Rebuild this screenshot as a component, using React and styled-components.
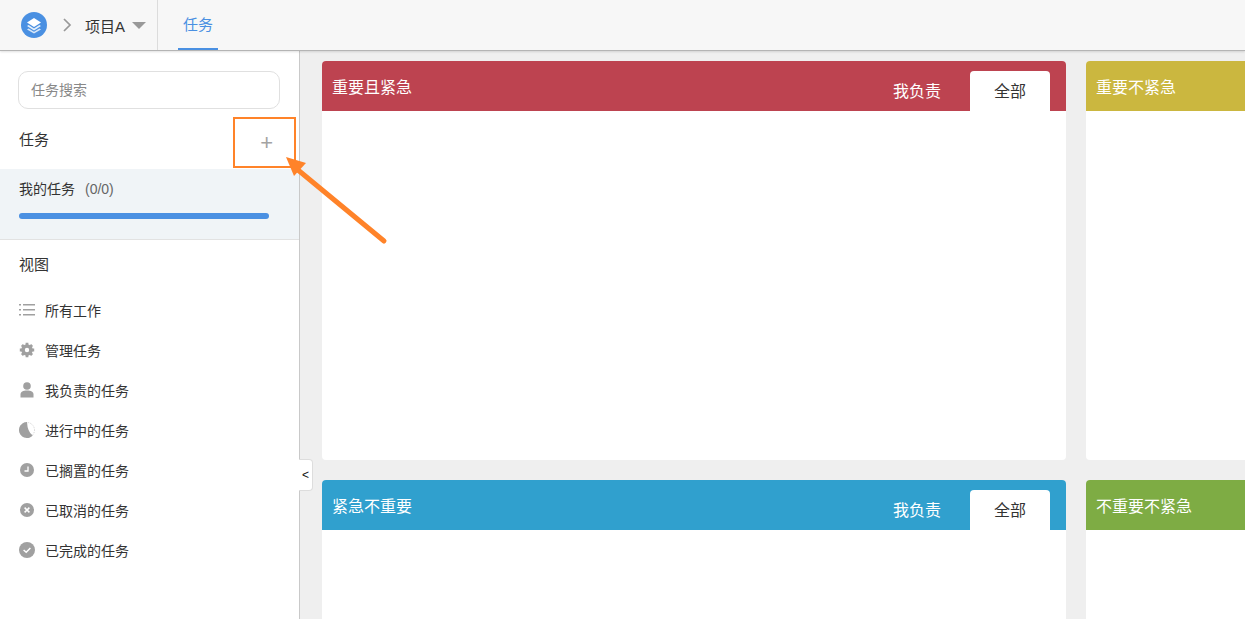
import React from 'react';
import styled, { createGlobalStyle } from 'styled-components';

const GlobalStyle = createGlobalStyle`
    html, body {
        margin: 0;
        height: 100%;
        overflow: hidden;
        background: #efefef;
        font-family: "Liberation Sans", "Noto Sans CJK SC", sans-serif;
    }
    * { box-sizing: border-box; }
`;

const Page = styled.div`
    position: relative;
    width: 1245px;
    height: 619px;
    overflow: hidden;
    display: flex;
    flex-direction: column;
`;

const TopBar = styled.header`
    height: 51px;
    flex: none;
    display: flex;
    background: #f7f7f7;
    border-bottom: 1px solid #b4b4b4;
    box-shadow: 0 1px 2px rgba(0, 0, 0, .12);
    z-index: 1;
`;

const Brand = styled.div`
    width: 158px;
    display: flex;
    align-items: center;
    padding-left: 21px;
    border-right: 1px solid #dcdcdc;
`;

const ChevronWrap = styled.span`
    display: flex;
    margin-left: 15px;
`;

const ProjectName = styled.span`
    font-size: 15px;
    color: #333;
    margin-left: 13px;
`;

const Caret = styled.span`
    width: 0;
    height: 0;
    margin: 1px 0 0 7px;
    border-left: 7px solid transparent;
    border-right: 7px solid transparent;
    border-top: 7px solid #999;
`;

const NavTab = styled.div`
    width: 40px;
    margin-left: 20px;
    height: 50px;
    line-height: 50px;
    text-align: center;
    font-size: 15px;
    color: #4a90e2;
    border-bottom: 2px solid #4a90e2;
`;

const Body = styled.div`
    flex: 1;
    display: flex;
    min-height: 0;
`;

const Sidebar = styled.aside`
    position: relative;
    width: 300px;
    flex: none;
    background: #fff;
    border-right: 1px solid #c9c9c9;
`;

const SearchWrap = styled.div`
    padding: 20px 19px 0 18px;
`;

const SearchBox = styled.div`
    height: 38px;
    border: 1px solid #e0e0e0;
    border-radius: 10px;
    padding-left: 12px;
    font-size: 14px;
    line-height: 36px;
    color: #888;
`;

const SectionHead = styled.div`
    display: flex;
    align-items: center;
    justify-content: space-between;
    height: 60px;
    padding: 0 26px 2px 19px;
    font-size: 15px;
    color: #333;
`;

const PlusIcon = styled.span`
    font-size: 22px;
    line-height: 1;
    color: #a3a3a3;
    margin-top: 9px;
`;

const MyTasks = styled.div`
    height: 71px;
    padding: 12px 30px 0 19px;
    background: #f0f4f7;
    border-bottom: 1px solid #e2e2e2;
`;

const MyTasksLabel = styled.div`
    font-size: 14px;
    line-height: 16px;
    color: #333;
`;

const Count = styled.span`
    margin-left: 10px;
    color: #666;
`;

const ProgressBar = styled.div`
    height: 6px;
    margin-top: 16px;
    border-radius: 3px;
    background: #4a90e2;
`;

const ViewTitle = styled.div`
    padding: 16px 0 0 19px;
    height: 50px;
    font-size: 15px;
    line-height: 18px;
    color: #333;
`;

const ViewList = styled.ul`
    list-style: none;
    margin: 0;
    padding: 0;
`;

const ViewItem = styled.li`
    display: flex;
    align-items: center;
    height: 40px;
    padding-left: 19px;
    font-size: 14px;
    color: #333;
`;

const IconSlot = styled.span`
    width: 16px;
    height: 16px;
    margin-right: 10px;
    flex: none;
    display: flex;
    justify-content: center;
    align-items: center;
`;

const CollapseHandle = styled.div`
    position: absolute;
    top: 408px;
    right: -14px;
    width: 14px;
    height: 32px;
    background: #fff;
    border: 1px solid #ddd;
    border-left: none;
    border-radius: 0 4px 4px 0;
    font-size: 12px;
    line-height: 30px;
    text-align: center;
    color: #111;
    z-index: 2;
`;

const Board = styled.main`
    flex: 1;
    min-width: 0;
    display: grid;
    grid-template-columns: 744px 744px;
    grid-auto-rows: 399px;
    column-gap: 20px;
    row-gap: 20px;
    padding: 10px 0 0 22px;
    overflow: hidden;
`;

const Quadrant = styled.section`
    background: #fff;
    border-radius: 4px;
    overflow: hidden;
`;

const QuadrantHead = styled.div`
    height: 50px;
    display: flex;
    justify-content: space-between;
    padding: 10px 16px 0 10px;
    background: ${props => props.$color};
    color: #fff;
`;

const QuadrantTitle = styled.span`
    font-size: 16px;
    line-height: 34px;
`;

const Tabs = styled.div`
    display: flex;
    align-items: flex-end;
    gap: 29px;
`;

const Tab = styled.div`
    width: ${props => (props.$active ? '80px' : 'auto')};
    height: 40px;
    text-align: center;
    font-size: 16px;
    line-height: 40px;
    border-radius: 4px 4px 0 0;
    color: ${props => (props.$active ? '#333' : '#fff')};
    background: ${props => (props.$active ? '#fff' : 'transparent')};
`;

const TabLabel = styled.span`
    position: relative;
    top: 1px;
`;

const Highlight = styled.div`
    position: absolute;
    left: 233px;
    top: 117px;
    width: 63px;
    height: 51px;
    border: 2px solid #ff8329;
    z-index: 3;
`;

const Arrow = styled.svg`
    position: absolute;
    left: 280px;
    top: 150px;
    z-index: 3;
`;

const LogoIcon = () => (
    <svg width="26" height="26" viewBox="0 0 26 26">
        <circle cx="13" cy="13" r="13" fill="#4a90e2" />
        <path d="M13 6 20 10.500 13 15 6 10.500Z" fill="#fff" />
        <path d="M7.600 13 6 14 13 18.400 20 14 18.400 13 13 16.400Z" fill="#e6f0fb" />
        <path d="M7.600 16.400 6 17.400 13 21.600 20 17.400 18.400 16.400 13 19.700Z" fill="#d8e7f8" />
    </svg>
);

const ChevronIcon = () => (
    <svg width="10" height="14" viewBox="0 0 10 14" fill="none">
        <path d="M2 1 8 7 2 13" stroke="#999" strokeWidth="1.700" />
    </svg>
);

const ListIcon = () => (
    <svg width="16" height="14" viewBox="0 0 16 14" fill="#a0a0a0">
        <rect x="0" y="1" width="2" height="1.500" />
        <rect x="0" y="6" width="2" height="1.500" />
        <rect x="0" y="11" width="2" height="1.500" />
        <rect x="4" y="1" width="12" height="1.500" />
        <rect x="4" y="6" width="12" height="1.500" />
        <rect x="4" y="11" width="12" height="1.500" />
    </svg>
);

const GearIcon = () => (
    <svg width="16" height="16" viewBox="0 0 16 16">
        <circle cx="8" cy="8" r="4" fill="none" stroke="#a0a0a0" strokeWidth="3.600" />
        <path d="M8 .8v14.400M.8 8h14.400M2.900 2.900l10.200 10.200M13.100 2.900 2.900 13.100" stroke="#a0a0a0" strokeWidth="2.800" strokeDasharray="3 8.400 3" />
    </svg>
);

const UserIcon = () => (
    <svg width="16" height="16" viewBox="0 0 16 16" fill="#a0a0a0">
        <circle cx="8" cy="4" r="3.800" />
        <path d="M1.500 15.500v-3C1.500 10 4 8.600 8 8.600s6.500 1.400 6.500 3.900v3Z" />
    </svg>
);

const ProgressIcon = () => (
    <svg width="16" height="16" viewBox="0 0 16 16">
        <circle cx="8" cy="8" r="7.500" fill="#fff" stroke="#c8c8c8" strokeWidth="0.800" strokeDasharray="1 1" />
        <path d="M8 0A8 8 0 1 0 13.700 13.600Q8.500 10 8 0Z" fill="#a0a0a0" />
    </svg>
);

const ClockIcon = () => (
    <svg width="14" height="14" viewBox="0 0 14 14">
        <circle cx="7" cy="7" r="7" fill="#a0a0a0" />
        <path d="M8 3.500V8H4.500" fill="none" stroke="#fff" strokeWidth="1.300" />
    </svg>
);

const CancelIcon = () => (
    <svg width="14" height="14" viewBox="0 0 14 14">
        <circle cx="7" cy="7" r="7" fill="#a0a0a0" />
        <path d="M4.600 4.600 9.400 9.400M9.400 4.600 4.600 9.400" stroke="#fff" strokeWidth="1.500" />
    </svg>
);

const DoneIcon = () => (
    <svg width="16" height="16" viewBox="0 0 16 16">
        <circle cx="8" cy="8" r="8" fill="#a0a0a0" />
        <path d="M4.600 8 7.200 10.300 11.400 6" fill="none" stroke="#fff" strokeWidth="1.500" />
    </svg>
);

const views = [
    { icon: ListIcon, label: '所有工作' },
    { icon: GearIcon, label: '管理任务' },
    { icon: UserIcon, label: '我负责的任务' },
    { icon: ProgressIcon, label: '进行中的任务' },
    { icon: ClockIcon, label: '已搁置的任务' },
    { icon: CancelIcon, label: '已取消的任务' },
    { icon: DoneIcon, label: '已完成的任务' },
];

const quadrants = [
    { title: '重要且紧急', color: '#bd4350', tabs: true },
    { title: '重要不紧急', color: '#cbb73f', tabs: false },
    { title: '紧急不重要', color: '#30a0ce', tabs: true },
    { title: '不重要不紧急', color: '#7eac44', tabs: false },
];

const App = () => {
    return (
        <Page>
            <GlobalStyle />
            <TopBar>
                <Brand>
                    <LogoIcon />
                    <ChevronWrap><ChevronIcon /></ChevronWrap>
                    <ProjectName>项目A</ProjectName>
                    <Caret />
                </Brand>
                <NavTab>任务</NavTab>
            </TopBar>
            <Body>
                <Sidebar>
                    <SearchWrap>
                        <SearchBox>任务搜索</SearchBox>
                    </SearchWrap>
                    <SectionHead>
                        <span>任务</span>
                        <PlusIcon>+</PlusIcon>
                    </SectionHead>
                    <MyTasks>
                        <MyTasksLabel>我的任务<Count>(0/0)</Count></MyTasksLabel>
                        <ProgressBar />
                    </MyTasks>
                    <ViewTitle>视图</ViewTitle>
                    <ViewList>
                        {views.map(({ icon: Icon, label }) => (
                            <ViewItem key={label}>
                                <IconSlot><Icon /></IconSlot>
                                {label}
                            </ViewItem>
                        ))}
                    </ViewList>
                    <CollapseHandle>&lt;</CollapseHandle>
                </Sidebar>
                <Board>
                    {quadrants.map(({ title, color, tabs }) => (
                        <Quadrant key={title}>
                            <QuadrantHead $color={color}>
                                <QuadrantTitle>{title}</QuadrantTitle>
                                {tabs && (
                                    <Tabs>
                                        <Tab><TabLabel>我负责</TabLabel></Tab>
                                        <Tab $active><TabLabel>全部</TabLabel></Tab>
                                    </Tabs>
                                )}
                            </QuadrantHead>
                        </Quadrant>
                    ))}
                </Board>
            </Body>
            <Highlight />
            <Arrow width="110" height="100" viewBox="280 150 110 100">
                <path d="M384 241 298 170" stroke="#ff8329" strokeWidth="5" strokeLinecap="round" fill="none" />
                <path d="M286 157 306 163 294 176Z" fill="#ff8329" />
            </Arrow>
        </Page>
    );
};

export default App;
